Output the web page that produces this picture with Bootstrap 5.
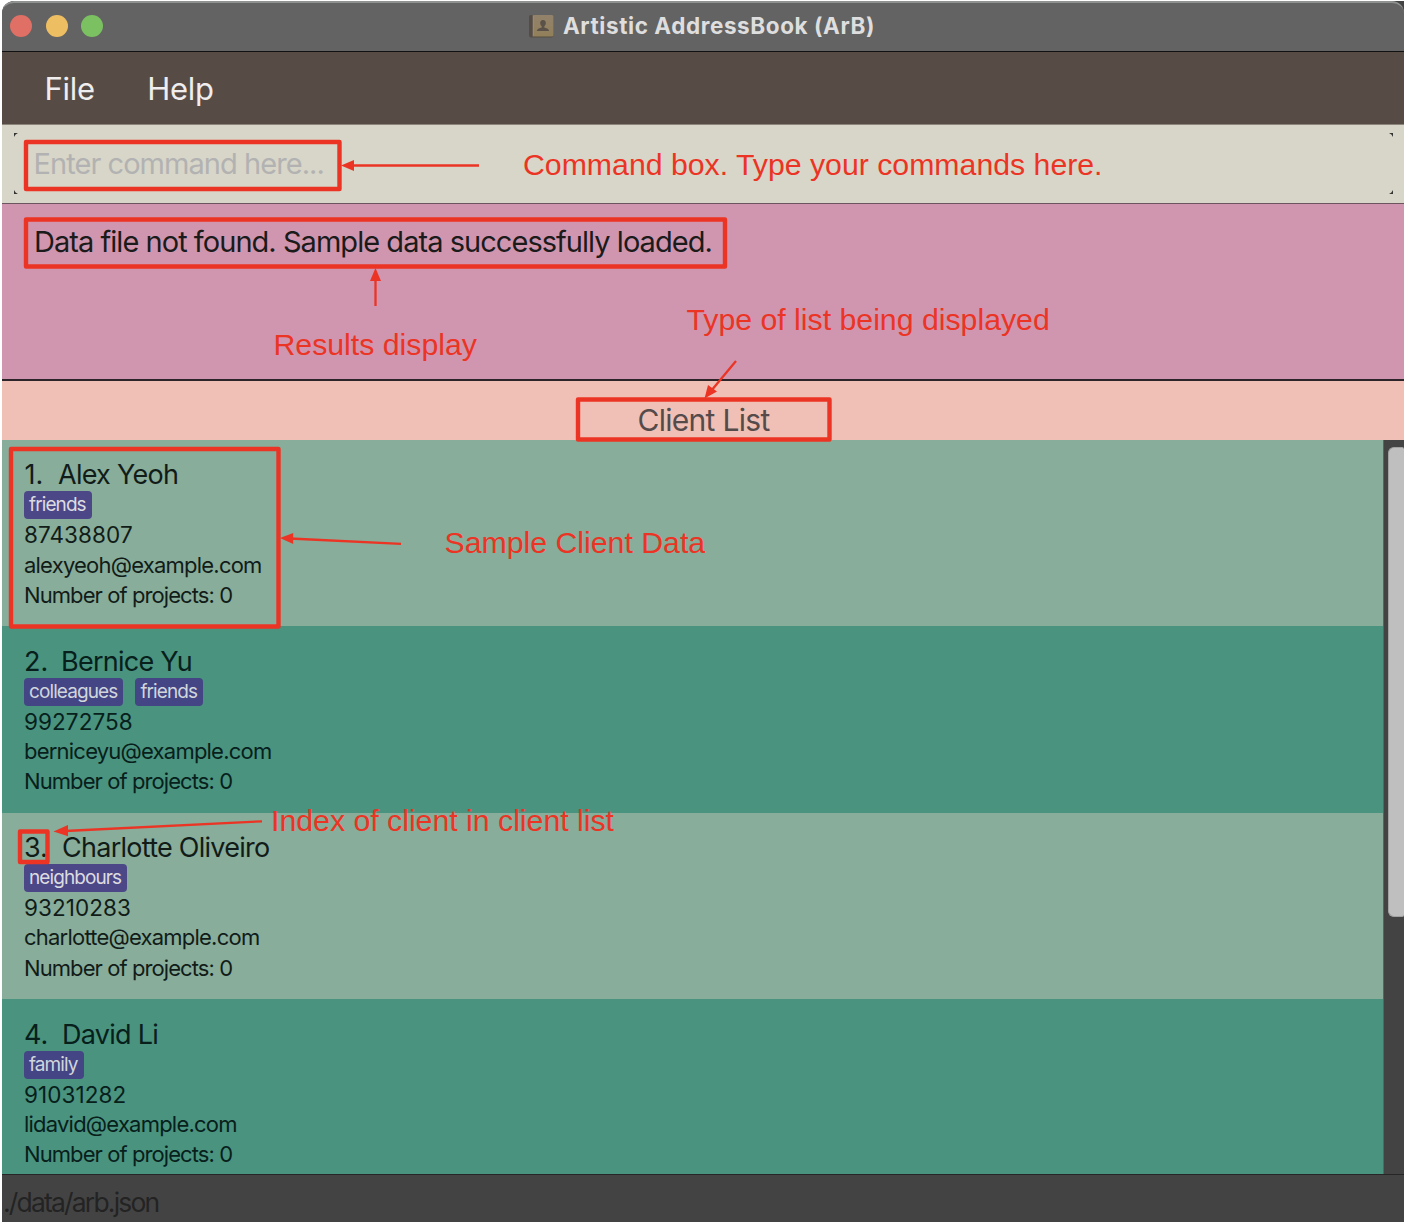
<!DOCTYPE html>
<html lang="en">
<head>
<meta charset="utf-8">
<meta name="viewport" content="width=device-width, initial-scale=1">
<title>Artistic AddressBook (ArB)</title>
<link href="https://cdn.jsdelivr.net/npm/bootstrap@5.3.0/dist/css/bootstrap.min.css" rel="stylesheet">
<style>
  body { font-family: Inter, "Liberation Sans", sans-serif; background: #fff; overflow: hidden; }
  .stage { width: 1404px; height: 1226px; padding: 1px 0 3px 2px; }
  .app-window { height: 1221px; border-radius: 12px 0 0 0; overflow: hidden; background: #434343; }
  .title-bar { height: 51px; background: #636363; border-top: 2px solid #8f9290; border-bottom: 1px solid #111; border-radius: 12px 12px 0 0; padding-bottom: 2px; }
  .lights { width: 200px; padding-left: 8px; gap: 13.5px; }
  .light { width: 22px; height: 22px; border-radius: 50%; }
  .app-title { font-size: 22.5px; font-weight: 700; letter-spacing: .58px; color: #dedede; line-height: 44px; padding-bottom: 1px; }
  .title-center { gap: 9px; padding-left: 0; padding-right: 2px; margin-right: 200px; }
  .menu-strip { height: 73px; background: #574b46; padding-left: 42.5px; gap: 52.5px; border-bottom: 1px solid #8b857c; }
  .menu-strip a { font-size: 31px; color: #efeded; line-height: 73px; letter-spacing: -.3px; text-decoration: none; }
  .command-area { height: 78px; background: #d8d6c8; padding: 8px 11px 9px 12px; }
  .command-field { position: relative; padding-left: 19.5px; font-size: 29px; letter-spacing: -.95px; color: #b2b2b2; line-height: 61px; }
  .corner { position: absolute; width: 4px; height: 4px; background: #333; }
  .corner.tl { left: 0; top: 0; clip-path: polygon(0 0,100% 0,40% 40%,0 100%); }
  .corner.bl { left: 0; bottom: 0; clip-path: polygon(0 0,40% 60%,100% 100%,0 100%); }
  .corner.tr { right: 0; top: 0; clip-path: polygon(0 0,100% 0,100% 100%,60% 40%); }
  .corner.br { right: 0; bottom: 0; clip-path: polygon(100% 0,100% 100%,0 100%,60% 60%); }
  .result-area { height: 178px; background: #d096af; border-top: 1px solid #6d5560; border-bottom: 2px solid #2c2428; padding: 14px 32px; font-size: 29px; line-height: 48px; letter-spacing: -.96px; color: #1b1b1b; }
  .list-title { height: 59px; background: #f0c0b6; font-size: 30px; letter-spacing: -.7px; color: #554b4b; line-height: 48px; padding: 15px 0 0 1px; }
  .client-area { height: 734px; }
  .client { height: 186.4px; padding: 19.4px 22px 0; background: #88ad9b; color: #111c18; }
  .client:nth-child(even) { background: #4a937f; color: #08201b; }
  .client-name { font-size: 27px; line-height: 32px; letter-spacing: -.74px; }
  .client-index { width: 38px; letter-spacing: 0; }
  .client:first-child .client-index { width: 34px; padding-left: .5px; }
  .client:nth-child(2) .client-index { width: 37px; }
  .tags { height: 28px; gap: 12px; }
  .tag { font-size: 19px; line-height: 28px; letter-spacing: -.9px; padding: 0 6px 0 5px; border-radius: 4px; background: #4c4888; color: #dcdce0; }
  .client:nth-child(even) .tag { background: #444585; color: #d0d6dc; }
  .detail { font-size: 22px; line-height: 30.2px; letter-spacing: -.78px; }
  .phone { font-size: 22.5px; letter-spacing: .08px; padding-top: 1px; line-height: 29.2px; }
  .projects { letter-spacing: -.92px; }
  .scroll-track { width: 21px; background: #434343; border-left: 1px solid #566; padding: 7px 0 0 4px; }
  .scroll-thumb { height: 470px; background: #bfbfbf; border: 1px solid #a2a2a2; border-right: 0; border-radius: 6px 2px 2px 6px; }
  .status-strip { height: 48px; border-top: 1px solid #262626; background: #434343; font-size: 26.5px; letter-spacing: -1.82px; line-height: 54px; padding-left: 1px; color: #232323; }
  .notes { position: absolute; left: 0; top: 0; pointer-events: none; }
  .notes text { font-family: "Liberation Sans", Arial, sans-serif; font-size: 30.25px; fill: #eb3424; }
</style>
<script src="https://cdn.jsdelivr.net/npm/bootstrap@5.3.0/dist/js/bootstrap.bundle.min.js"></script>
</head>
<body>
<div class="stage position-relative">
  <div class="app-window d-flex flex-column">
    <header class="title-bar d-flex align-items-center flex-shrink-0">
      <div class="lights d-flex">
        <span class="light" style="background:#e07065"></span>
        <span class="light" style="background:#eebf62"></span>
        <span class="light" style="background:#7bc161"></span>
      </div>
      <div class="title-center d-flex flex-grow-1 justify-content-center align-items-center">
        <svg width="25" height="24" viewBox="0 0 25 24" aria-hidden="true">
          <defs><linearGradient id="cover" x1="0" y1="0" x2="0" y2="1"><stop offset="0" stop-color="#92826b"/><stop offset="1" stop-color="#92805a"/></linearGradient></defs>
          <rect x="0" y="1" width="24.5" height="22.500" rx="2" fill="#544c45"/>
          <rect x="4" y="1" width="20.5" height="21.500" rx="1.500" fill="url(#cover)"/>
          <path d="M4.200 1v21.500" stroke="#a2937d" stroke-width=".8"/>
          <path d="M14 6c-2 0-3 1.400-2.800 3.200.1 1.400.8 2.400 1.500 3.100v1.300c-1.800.7-4.500 1.100-4.900 3.400h12.400c-.4-2.300-3.100-2.700-4.900-3.400v-1.300c.7-.7 1.400-1.700 1.500-3.100C17 7.400 16 6 14 6z" fill="#5a5148"/>
        </svg>
        <div class="app-title">Artistic AddressBook (ArB)</div>
      </div>
    </header>
    <nav class="menu-strip d-flex flex-shrink-0"><a href="#">File</a><a href="#">Help</a></nav>
    <section class="command-area flex-shrink-0">
      <div class="command-field">Enter command here...
        <i class="corner tl"></i><i class="corner tr"></i><i class="corner bl"></i><i class="corner br"></i>
      </div>
    </section>
    <section class="result-area flex-shrink-0">Data file not found. Sample data successfully loaded.</section>
    <h1 class="list-title text-center fw-normal m-0 flex-shrink-0">Client List</h1>
    <main class="client-area d-flex flex-shrink-0">
      <div class="flex-grow-1 overflow-hidden">
        <article class="client">
          <div class="client-name d-flex"><span class="client-index">1.</span><span>Alex Yeoh</span></div>
          <div class="tags d-flex"><span class="tag">friends</span></div>
          <div class="detail phone">87438807</div><div class="detail">alexyeoh@example.com</div><div class="detail projects">Number of projects: 0</div>
        </article>
        <article class="client">
          <div class="client-name d-flex"><span class="client-index">2.</span><span>Bernice Yu</span></div>
          <div class="tags d-flex"><span class="tag">colleagues</span><span class="tag">friends</span></div>
          <div class="detail phone">99272758</div><div class="detail">berniceyu@example.com</div><div class="detail projects">Number of projects: 0</div>
        </article>
        <article class="client">
          <div class="client-name d-flex"><span class="client-index">3.</span><span>Charlotte Oliveiro</span></div>
          <div class="tags d-flex"><span class="tag">neighbours</span></div>
          <div class="detail phone">93210283</div><div class="detail">charlotte@example.com</div><div class="detail projects">Number of projects: 0</div>
        </article>
        <article class="client">
          <div class="client-name d-flex"><span class="client-index">4.</span><span>David Li</span></div>
          <div class="tags d-flex"><span class="tag">family</span></div>
          <div class="detail phone">91031282</div><div class="detail">lidavid@example.com</div><div class="detail projects">Number of projects: 0</div>
        </article>
      </div>
      <div class="scroll-track flex-shrink-0"><div class="scroll-thumb"></div></div>
    </main>
    <footer class="status-strip flex-shrink-0">./data/arb.json</footer>
  </div>

  <svg class="notes" width="1404" height="1226" viewBox="0 0 1404 1226">
    <g fill="none" stroke="#eb3424" stroke-width="4.400" stroke-linejoin="round">
      <rect x="26" y="142" width="313.500" height="47"/>
      <rect x="26" y="219.500" width="699" height="47"/>
      <rect x="578" y="399.500" width="251.500" height="40"/>
      <rect x="11" y="449" width="267.500" height="177.500"/>
      <rect x="20" y="831.500" width="27.500" height="30.500"/>
    </g>
    <g stroke="#eb3424" stroke-width="2.300">
      <path d="M479 165.500H350"/><path d="M375.500 306V278"/><path d="M736 361L711 391"/><path d="M401 543.800L290 538.500"/><path d="M262 821.300L65 831"/>
    </g>
    <g fill="#eb3424">
      <path d="M341 165.500L354 160v11z"/><path d="M375.500 268L381 281h-11z"/><path d="M704.500 398.500L708 385l9 6.500z"/><path d="M280 538L293.200 533v11z"/><path d="M53.500 831.500L68 825v11.200z"/>
    </g>
    <text x="523" y="174.500">Command box. Type your commands here.</text>
    <text x="273.500" y="355.300">Results display</text>
    <text x="686.500" y="330">Type of list being displayed</text>
    <text x="444.500" y="552.700">Sample Client Data</text>
    <text x="271" y="831">Index of client in client list</text>
  </svg>
</div>
</body>
</html>
